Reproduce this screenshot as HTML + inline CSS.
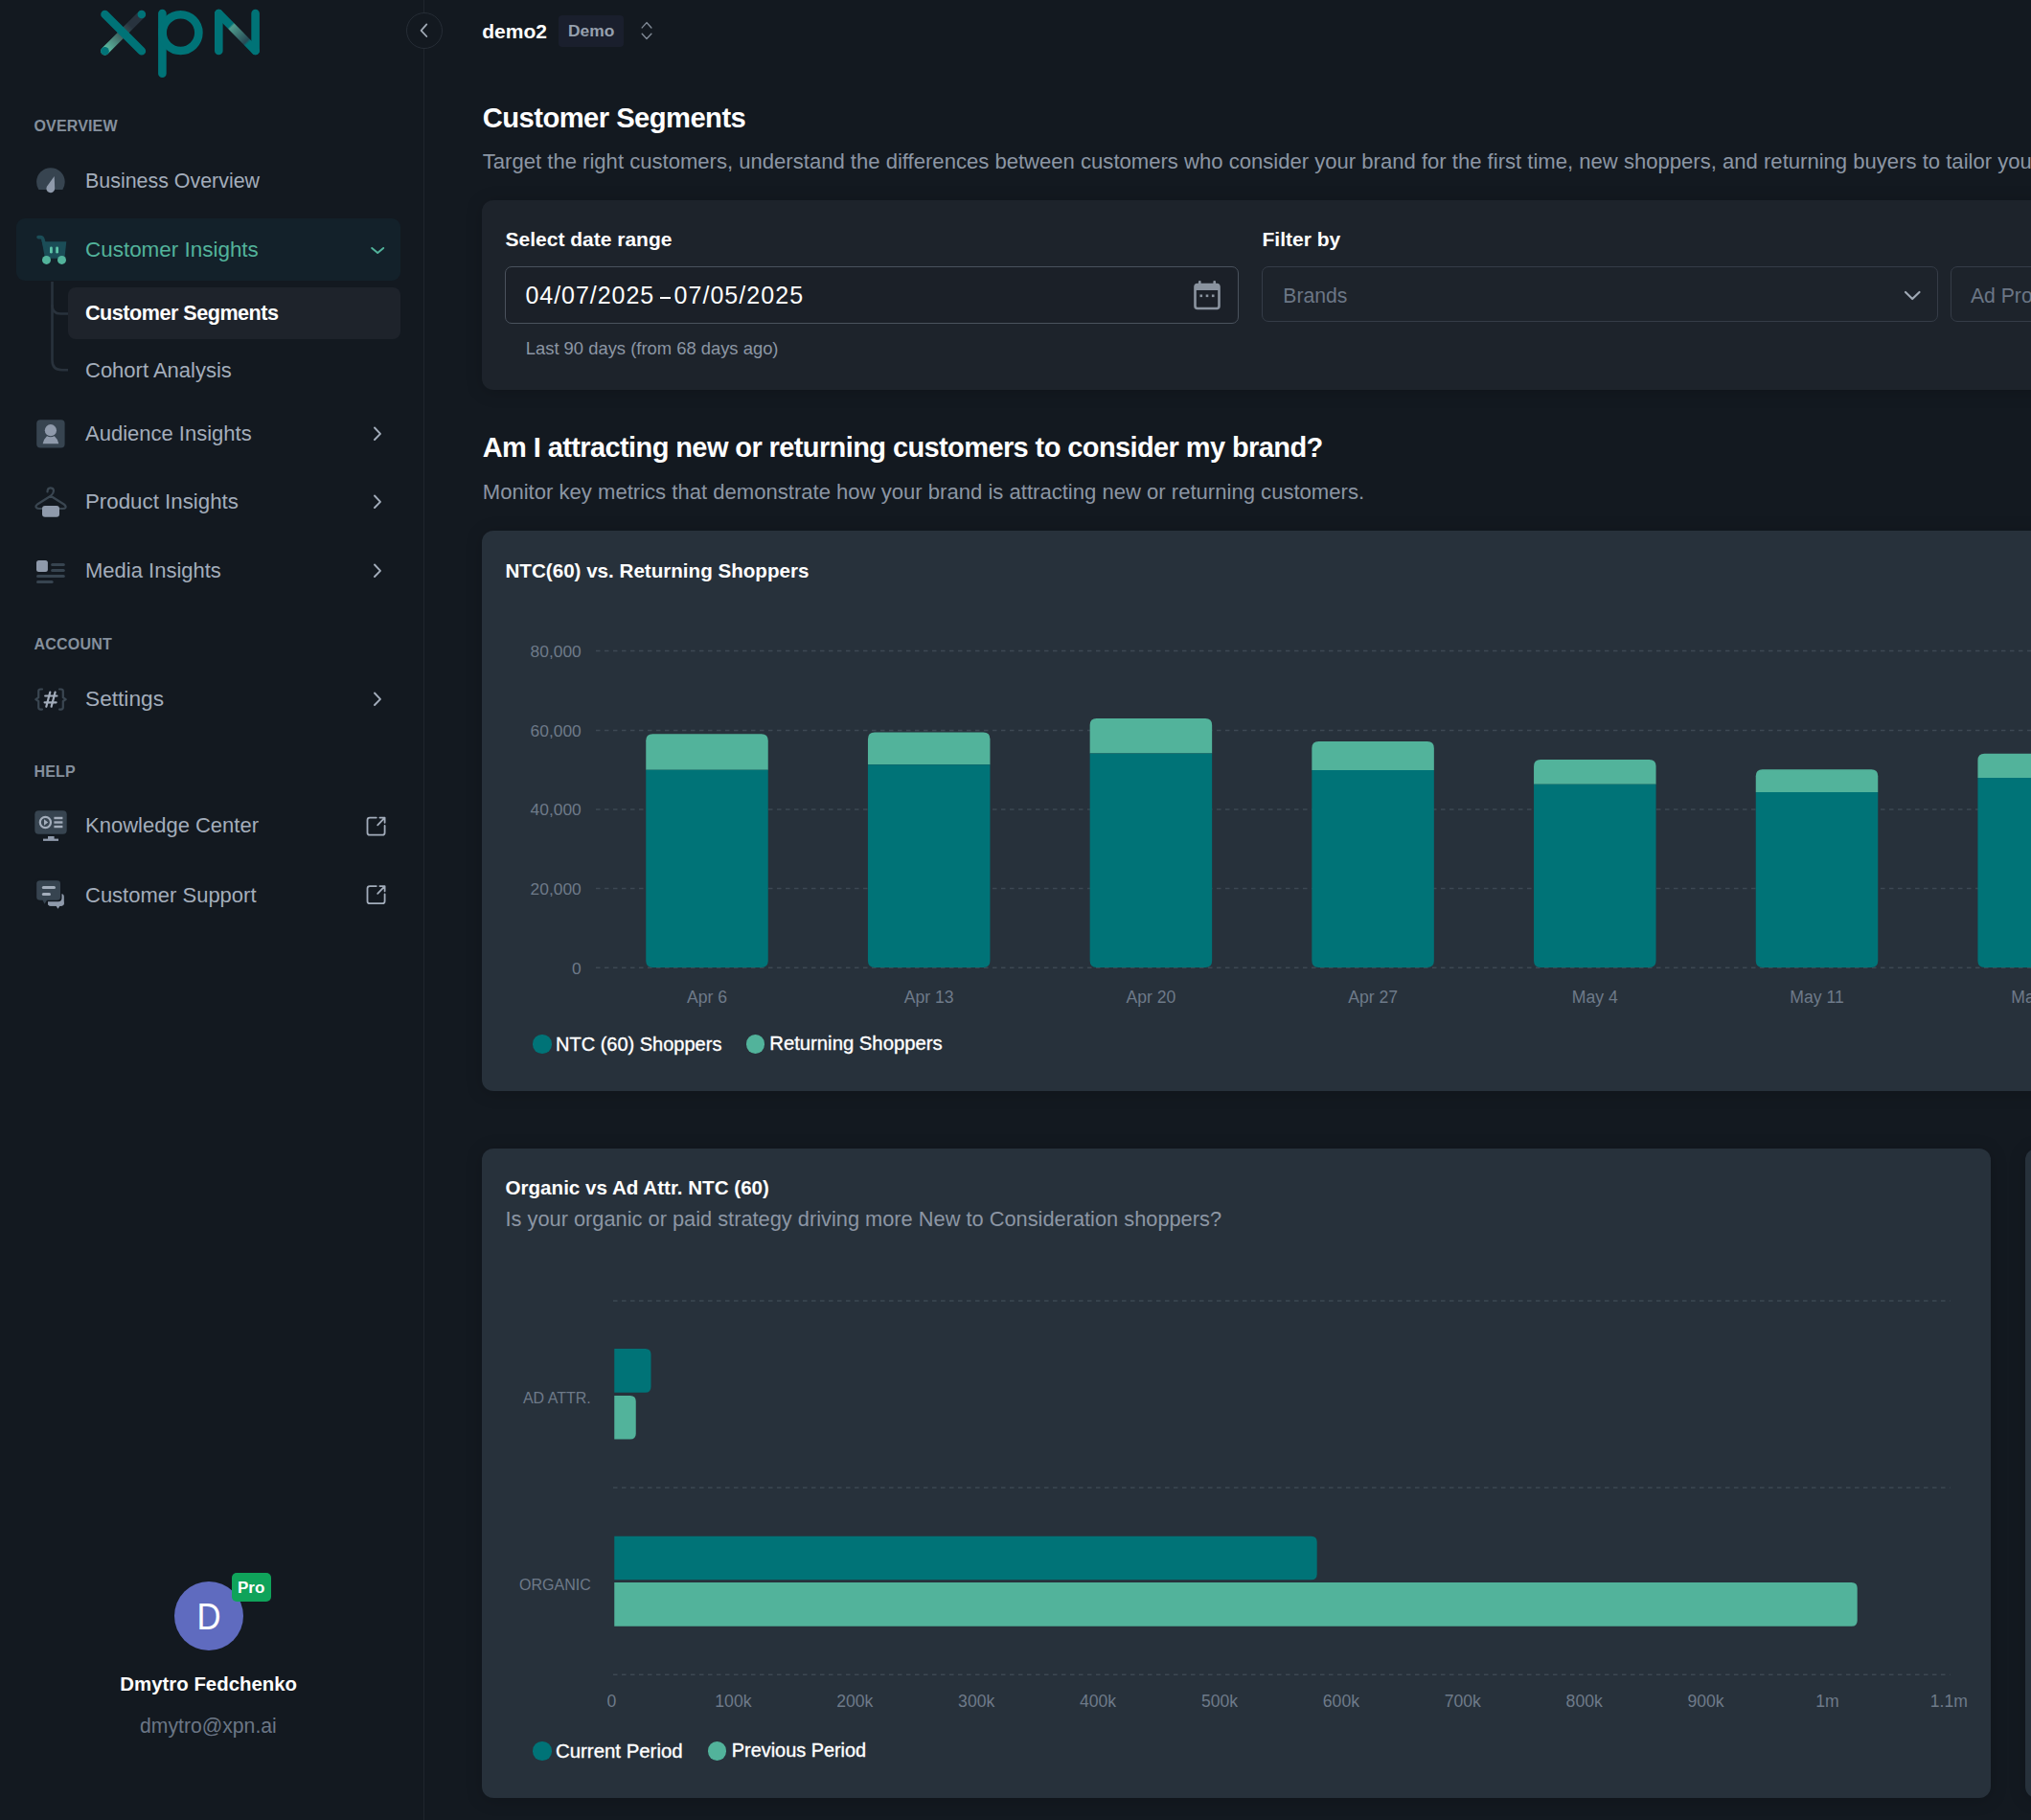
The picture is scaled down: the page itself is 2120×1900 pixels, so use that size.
<!DOCTYPE html>
<html><head><meta charset="utf-8"><title>Customer Segments</title>
<style>
html,body{margin:0;padding:0;}
body{width:2120px;height:1900px;overflow:hidden;position:relative;background:#131920;font-family:"Liberation Sans",sans-serif;}
.t{position:absolute;white-space:nowrap;}
.r{position:absolute;}
</style></head><body>
<div class="r" style="left:442px;top:0;width:1px;height:1900px;background:#1f252d"></div>
<svg class="r" style="left:0;top:0" width="300" height="90" viewBox="0 0 300 90">
<defs>
<linearGradient id="gx" x1="109.5" y1="53.3" x2="147.85" y2="15" gradientUnits="userSpaceOnUse">
<stop offset="0" stop-color="#5fc4a8"/><stop offset="0.45" stop-color="#3d5d5c"/><stop offset="0.7" stop-color="#28333e"/><stop offset="1" stop-color="#28333e"/></linearGradient>
<linearGradient id="gn" x1="228.3" y1="14" x2="266.6" y2="52.9" gradientUnits="userSpaceOnUse">
<stop offset="0" stop-color="#007377"/><stop offset="0.32" stop-color="#007377"/><stop offset="0.36" stop-color="#4f9c8c"/><stop offset="0.75" stop-color="#264a55"/><stop offset="0.8" stop-color="#007377"/><stop offset="1" stop-color="#007377"/></linearGradient>
</defs>
<g fill="none" stroke-linecap="round" stroke-width="8.6">
<line x1="109.5" y1="53.3" x2="147.85" y2="15" stroke="url(#gx)"/>
<line x1="109.5" y1="15" x2="147.85" y2="53.3" stroke="#007377"/>
<line x1="169.4" y1="14" x2="169.4" y2="76.7" stroke="#007377"/>
<circle cx="188.5" cy="34.1" r="18.9" stroke="#007377"/>
<line x1="228.3" y1="14" x2="228.3" y2="52.9" stroke="#007377"/>
<line x1="266.6" y1="14" x2="266.6" y2="52.9" stroke="#007377"/>
<line x1="228.3" y1="14" x2="266.6" y2="52.9" stroke="url(#gn)"/>
</g>
<circle cx="109.5" cy="53.3" r="4.3" fill="#007377"/>
<circle cx="147.85" cy="15" r="4.3" fill="#007377"/>
</svg>
<svg class="r" style="left:420px;top:9px" width="46" height="46" viewBox="420 9 46 46">
<circle cx="443" cy="32" r="18.5" fill="#131920" stroke="#262d36" stroke-width="1"/>
<polyline points="445.3,25.4 439.6,31.9 445.3,38" fill="none" stroke="#a0a9b5" stroke-width="1.8" stroke-linecap="round" stroke-linejoin="round"/>
</svg>
<div class="t" style="left:35.50px;top:124.46px;font-size:16px;line-height:16px;color:#85909d;font-weight:700;letter-spacing:0.15px;">OVERVIEW</div>
<div class="t" style="left:35.50px;top:665.46px;font-size:16px;line-height:16px;color:#85909d;font-weight:700;letter-spacing:0.2px;">ACCOUNT</div>
<div class="t" style="left:35.50px;top:798.46px;font-size:16px;line-height:16px;color:#85909d;font-weight:700;letter-spacing:0.15px;">HELP</div>
<div class="r" style="left:17.00px;top:228.00px;width:400.50px;height:65.00px;background:#13212a;border-radius:9px;"></div>
<div class="r" style="left:71.00px;top:300.20px;width:346.50px;height:53.70px;background:#1e232b;border-radius:8px;"></div>
<svg class="r" style="left:40px;top:290px" width="40" height="110" viewBox="40 290 40 110">
<path d="M54.5 294 V319 Q54.5 327.5 63 327.5 H71" fill="none" stroke="#29323c" stroke-width="2.6"/>
<path d="M54.5 318 V376 Q54.5 386.2 64.7 386.2 H71" fill="none" stroke="#29323c" stroke-width="2.6"/>
</svg>
<div class="t" style="left:89.00px;top:178.67px;font-size:21.42px;line-height:21.42px;color:#a3adbb;font-weight:400;">Business Overview</div>
<div class="t" style="left:89.00px;top:250.20px;font-size:22.44px;line-height:22.44px;color:#52b39b;font-weight:400;">Customer Insights</div>
<div class="t" style="left:89.00px;top:315.92px;font-size:21.6px;line-height:21.6px;color:#ffffff;font-weight:700;letter-spacing:-0.5px;">Customer Segments</div>
<div class="t" style="left:89.00px;top:375.88px;font-size:22px;line-height:22px;color:#a3adbb;font-weight:400;">Cohort Analysis</div>
<div class="t" style="left:89.00px;top:442.38px;font-size:22px;line-height:22px;color:#a3adbb;font-weight:400;">Audience Insights</div>
<div class="t" style="left:89.00px;top:513.12px;font-size:22.3px;line-height:22.3px;color:#a3adbb;font-weight:400;">Product Insights</div>
<div class="t" style="left:89.00px;top:585.38px;font-size:22px;line-height:22px;color:#a3adbb;font-weight:400;">Media Insights</div>
<div class="t" style="left:89.00px;top:717.78px;font-size:22.7px;line-height:22.7px;color:#a3adbb;font-weight:400;">Settings</div>
<div class="t" style="left:89.00px;top:851.38px;font-size:22px;line-height:22px;color:#a3adbb;font-weight:400;">Knowledge Center</div>
<div class="t" style="left:89.00px;top:923.88px;font-size:22px;line-height:22px;color:#a3adbb;font-weight:400;">Customer Support</div>
<svg class="r" style="left:0;top:0" width="440" height="960" viewBox="0 0 440 960">
<!-- gauge -->
<clipPath id="cg"><rect x="30" y="160" width="50" height="38"/></clipPath>
<circle cx="52.9" cy="190" r="14.8" fill="#374450" clip-path="url(#cg)"/>
<path d="M56.7 184 L57.2 196.8 A4.4 4.4 0 1 1 48.9 194.8 Z" fill="#8f9aab"/>
<!-- cart -->
<path d="M43.6 251.5 L45.4 252.2 H69.3 L67.4 269.8 H47 Z" fill="#1b4d57"/>
<path d="M40 247.6 H42.3 Q44.3 247.6 44.8 249.8 L47.2 258" fill="none" stroke="#1b4d57" stroke-width="3.6" stroke-linecap="round" stroke-linejoin="round"/>
<rect x="52" y="257.4" width="2.8" height="7.2" rx="1.4" fill="#5dc4a8"/>
<rect x="58.2" y="257.4" width="2.8" height="7.2" rx="1.4" fill="#5dc4a8"/>
<circle cx="48.5" cy="271.4" r="4.5" fill="#52b39b"/>
<circle cx="64.5" cy="271.4" r="4.5" fill="#52b39b"/>
<!-- audience -->
<rect x="38.2" y="438.2" width="29.4" height="29.4" rx="4" fill="#374450"/>
<circle cx="52.9" cy="449.2" r="6.1" fill="#8f9aab"/>
<path d="M49 455.2 Q52.9 457.5 56.8 455.2 Q60.5 458.5 61.3 463.2 H44.6 Q45.5 458.5 49 455.2 Z" fill="#8f9aab"/>
<!-- hanger -->
<path d="M49.5 513.5 Q49.5 509.3 52.7 509.3 Q56 509.3 56 512.6 Q56 515 52.9 517.8 L39 526.5 Q36.5 528.5 38 530 Q38.8 531 41 531 H65.5 Q67.8 531 68.4 530 Q69.2 528.3 66.8 526.5 L52.9 517.8" fill="none" stroke="#3a4651" stroke-width="2.2" stroke-linecap="round" stroke-linejoin="round"/>
<rect x="44" y="528" width="18" height="11.8" rx="3" fill="#8f9aab"/>
<!-- media -->
<rect x="38" y="584.9" width="11.9" height="12.1" rx="2.5" fill="#8f9aab"/>
<g stroke="#374450" stroke-width="3" stroke-linecap="round">
<line x1="54.6" y1="589.4" x2="66.3" y2="589.4"/><line x1="54.6" y1="595.5" x2="66.3" y2="595.5"/>
<line x1="39.5" y1="601.4" x2="66.3" y2="601.4"/><line x1="39.5" y1="607.4" x2="54.2" y2="607.4"/>
</g>
<!-- settings braces -->
<g fill="none" stroke="#3a4651" stroke-width="2.2" stroke-linecap="round" stroke-linejoin="round">
<path d="M44 719.5 H42.3 Q40.2 719.5 40.2 721.6 V728.2 L37.3 730.1 L40.2 732 V738.6 Q40.2 740.6 42.3 740.6 H44"/>
<path d="M62 719.5 H63.7 Q65.8 719.5 65.8 721.6 V728.2 L68.7 730.1 L65.8 732 V738.6 Q65.8 740.6 63.7 740.6 H62"/>
</g>
<g stroke="#a3adbb" stroke-width="2.2" stroke-linecap="round">
<line x1="52.3" y1="722.5" x2="48.3" y2="737.7"/><line x1="57.6" y1="722.5" x2="53.6" y2="737.7"/>
<line x1="47.2" y1="726.5" x2="59.4" y2="726.5"/><line x1="46.6" y1="733.3" x2="58.6" y2="733.3"/>
</g>
<!-- knowledge -->
<rect x="36.3" y="846.2" width="33.4" height="24.6" rx="4" fill="#374450"/>
<circle cx="47.4" cy="858.5" r="5.6" fill="none" stroke="#a3adbb" stroke-width="2.2"/>
<path d="M46 855.3 L50.2 858.5 L46 861.7 Z" fill="#a3adbb"/>
<g stroke="#a3adbb" stroke-width="2.4"><line x1="56.4" y1="854" x2="65.4" y2="854"/><line x1="56.4" y1="858.5" x2="65.4" y2="858.5"/><line x1="56.4" y1="863" x2="65.4" y2="863"/></g>
<rect x="50" y="873" width="6.6" height="3" fill="#8f9aab"/>
<rect x="45" y="875.6" width="16" height="2.3" fill="#8f9aab"/>
<!-- support -->
<path d="M52 940 H63 Q66.8 940 66.8 943.2 V942.5 Q66.8 945.7 63.5 945.7 H62.5 L60.5 948.7 L58.5 945.7 H53 Q50 945.7 50 942.5 Z" fill="#8f9aab"/>
<path d="M63.5 933 Q66.8 933 66.8 936 V943 Q66.8 945.7 63.5 945.7 H53 Q50 945.7 50 943 V941 H63.5 Z" fill="#8f9aab"/>
<path d="M41.7 917.8 H60.2 Q64.5 917.8 64.5 921.8 V937.5 Q64.5 941.2 60.8 941.2 H49.5 L46.5 945.3 L44.5 941.2 H41.7 Q36.8 941.2 36.8 937.5 V921.8 Q36.8 917.8 41.7 917.8 Z" fill="#131920"/>
<path d="M42 919.3 H59.5 Q63 919.3 63 922.5 V936.5 Q63 939.7 59.5 939.7 H49 L46.5 943.8 L44.5 939.7 H42 Q38.2 939.7 38.2 936.5 V922.5 Q38.2 919.3 42 919.3 Z" fill="#374450"/>
<g stroke="#a3adbb" stroke-width="3" stroke-linecap="round"><line x1="45.3" y1="926.5" x2="56.5" y2="926.5"/><line x1="45.3" y1="933.4" x2="51.5" y2="933.4"/></g>
<!-- chevrons -->
<polyline points="388.2,259 394.2,264 400.2,259" fill="none" stroke="#52b39b" stroke-width="2" stroke-linecap="round" stroke-linejoin="round"/>
<g fill="none" stroke="#a3adbb" stroke-width="1.9" stroke-linecap="round" stroke-linejoin="round">
<polyline points="391,446.5 397,452.8 391,459"/>
<polyline points="391,517.5 397,523.8 391,530"/>
<polyline points="391,589.5 397,595.8 391,602"/>
<polyline points="391,723.5 397,729.8 391,736"/>
</g>
<!-- external links -->
<g fill="none" stroke="#a3adbb" stroke-width="1.8" stroke-linecap="round" stroke-linejoin="round">
<path d="M392.8 853.6 H386 Q383.5 853.6 383.5 856.1 V869.2 Q383.5 871.7 386 871.7 H399.1 Q401.6 871.7 401.6 869.2 V862"/>
<path d="M394.2 861.3 L401.4 853.8 M396.4 853.6 H401.6 V858.8"/>
<path d="M392.8 925.1 H386 Q383.5 925.1 383.5 927.6 V940.7 Q383.5 943.2 386 943.2 H399.1 Q401.6 943.2 401.6 940.7 V933.5"/>
<path d="M394.2 932.8 L401.4 925.3 M396.4 925.1 H401.6 V930.3"/>
</g>
</svg>
<div class="r" style="left:181.8px;top:1650.6px;width:72px;height:72px;border-radius:50%;background:#5f6bbf"></div>
<div class="t" style="left:18.20px;width:400px;text-align:center;top:1668.61px;font-size:38.5px;line-height:38.5px;color:#ffffff;font-weight:400;transform:scaleX(0.9);">D</div>
<div class="r" style="left:241.60px;top:1641.90px;width:41.20px;height:30.00px;background:#0fa35a;border-radius:5px;"></div>
<div class="t" style="left:62.20px;width:400px;text-align:center;top:1648.51px;font-size:17px;line-height:17px;color:#ffffff;font-weight:700;">Pro</div>
<div class="t" style="left:17.70px;width:400px;text-align:center;top:1748.23px;font-size:20.4px;line-height:20.4px;color:#ffffff;font-weight:700;">Dmytro Fedchenko</div>
<div class="t" style="left:17.40px;width:400px;text-align:center;top:1791.45px;font-size:21.2px;line-height:21.2px;color:#6b7685;font-weight:400;">dmytro@xpn.ai</div>
<div class="t" style="left:503.25px;top:22.22px;font-size:21px;line-height:21px;color:#ffffff;font-weight:700;">demo2</div>
<div class="r" style="left:583.00px;top:16.25px;width:67.75px;height:32.50px;background:#1a1f2d;border-radius:4px;"></div>
<div class="t" style="left:593.00px;top:23.67px;font-size:17.4px;line-height:17.4px;color:#96a0ae;font-weight:700;">Demo</div>
<svg class="r" style="left:660px;top:18px" width="30" height="30" viewBox="660 18 30 30">
<g fill="none" stroke="#808a96" stroke-width="1.4" stroke-linecap="round" stroke-linejoin="round">
<polyline points="670.2,28.9 675,23.6 679.9,28.9"/><polyline points="670.2,35.3 675,40.4 679.9,35.3"/></g></svg>
<div class="t" style="left:503.75px;top:108.53px;font-size:29.2px;line-height:29.2px;color:#ffffff;font-weight:700;letter-spacing:-0.55px;">Customer Segments</div>
<div class="t" style="left:503.75px;top:157.55px;font-size:22.09px;line-height:22.09px;color:#8c96a4;font-weight:400;">Target the right customers, understand the differences between customers who consider your brand for the first time, new shoppers, and returning buyers to tailor your marketing strategies.</div>
<div class="r" style="left:503.00px;top:209.00px;width:1697.00px;height:198.00px;background:#1d232b;border-radius:12px;box-shadow:0 2px 18px rgba(0,0,0,0.18);"></div>
<div class="t" style="left:527.50px;top:239.22px;font-size:21px;line-height:21px;color:#ffffff;font-weight:700;">Select date range</div>
<div class="r" style="left:527px;top:278.25px;width:765.5px;height:59.25px;box-sizing:border-box;border:1.5px solid #4a525d;border-radius:7px;background:#1b2028"></div>
<div class="t" style="left:548.50px;top:295.94px;font-size:25px;line-height:25px;color:#ffffff;font-weight:400;letter-spacing:0.95px;">04/07/2025</div>
<div class="r" style="left:688.50px;top:310.00px;width:11.30px;height:2.00px;background:#ffffff;border-radius:0;"></div>
<div class="t" style="left:703.50px;top:295.94px;font-size:25px;line-height:25px;color:#ffffff;font-weight:400;letter-spacing:1.05px;">07/05/2025</div>
<svg class="r" style="left:1240px;top:288px" width="40" height="40" viewBox="1240 288 40 40">
<rect x="1247.5" y="297" width="25" height="25" rx="2.5" fill="none" stroke="#8a939f" stroke-width="2.6"/>
<rect x="1247.5" y="297" width="25" height="6" fill="#8a939f"/>
<rect x="1251" y="293" width="2.6" height="6" rx="1" fill="#8a939f"/>
<rect x="1266.4" y="293" width="2.6" height="6" rx="1" fill="#8a939f"/>
<rect x="1252.5" y="307.5" width="2.6" height="2.6" fill="#8a939f"/><rect x="1258.7" y="307.5" width="2.6" height="2.6" fill="#8a939f"/><rect x="1264.9" y="307.5" width="2.6" height="2.6" fill="#8a939f"/>
</svg>
<div class="t" style="left:548.75px;top:355.42px;font-size:18.4px;line-height:18.4px;color:#8c96a4;font-weight:400;">Last 90 days (from 68 days ago)</div>
<div class="t" style="left:1317.50px;top:239.22px;font-size:21px;line-height:21px;color:#ffffff;font-weight:700;">Filter by</div>
<div class="r" style="left:1317px;top:278.25px;width:706.25px;height:57.5px;box-sizing:border-box;border:1.5px solid #353c47;border-radius:7px"></div>
<div class="t" style="left:1339.25px;top:298.30px;font-size:21.2px;line-height:21.2px;color:#6b7685;font-weight:400;">Brands</div>
<svg class="r" style="left:1980px;top:296px" width="30" height="24" viewBox="1980 296 30 24">
<polyline points="1989,305 1996.2,312 2003.5,305" fill="none" stroke="#a0a9b5" stroke-width="2.2" stroke-linecap="round" stroke-linejoin="round"/></svg>
<div class="r" style="left:2035.75px;top:278.25px;width:400px;height:57.5px;box-sizing:border-box;border:1.5px solid #353c47;border-radius:7px"></div>
<div class="t" style="left:2056.90px;top:298.05px;font-size:21.2px;line-height:21.2px;color:#6b7685;font-weight:400;">Ad Product</div>
<div class="t" style="left:503.75px;top:453.45px;font-size:29px;line-height:29px;color:#ffffff;font-weight:700;letter-spacing:-0.6px;">Am I attracting new or returning customers to consider my brand?</div>
<div class="t" style="left:503.75px;top:502.56px;font-size:22.08px;line-height:22.08px;color:#8c96a4;font-weight:400;">Monitor key metrics that demonstrate how your brand is attracting new or returning customers.</div>
<div class="r" style="left:503.00px;top:553.75px;width:1797.00px;height:585.00px;background:#27313b;border-radius:12px;box-shadow:0 2px 18px rgba(0,0,0,0.18);"></div>
<div class="t" style="left:527.50px;top:585.56px;font-size:20.6px;line-height:20.6px;color:#ffffff;font-weight:700;">NTC(60) vs. Returning Shoppers</div>
<div class="t" style="left:538.00px;width:400px;text-align:center;top:1032.60px;font-size:17.6px;line-height:17.6px;color:#6e7a89;font-weight:400;">Apr 6</div>
<div class="t" style="left:769.70px;width:400px;text-align:center;top:1032.60px;font-size:17.6px;line-height:17.6px;color:#6e7a89;font-weight:400;">Apr 13</div>
<div class="t" style="left:1001.40px;width:400px;text-align:center;top:1032.60px;font-size:17.6px;line-height:17.6px;color:#6e7a89;font-weight:400;">Apr 20</div>
<div class="t" style="left:1233.10px;width:400px;text-align:center;top:1032.60px;font-size:17.6px;line-height:17.6px;color:#6e7a89;font-weight:400;">Apr 27</div>
<div class="t" style="left:1464.80px;width:400px;text-align:center;top:1032.60px;font-size:17.6px;line-height:17.6px;color:#6e7a89;font-weight:400;">May 4</div>
<div class="t" style="left:1696.50px;width:400px;text-align:center;top:1032.60px;font-size:17.6px;line-height:17.6px;color:#6e7a89;font-weight:400;">May 11</div>
<div class="t" style="left:1928.20px;width:400px;text-align:center;top:1032.60px;font-size:17.6px;line-height:17.6px;color:#6e7a89;font-weight:400;">May 18</div>
<svg class="r" style="left:0;top:0" width="2120" height="1900" viewBox="0 0 2120 1900">
<line x1="622" y1="679.5" x2="2200" y2="679.5" stroke="#3d4853" stroke-width="1.6" stroke-dasharray="4.5 4.5"/>
<line x1="622" y1="762.5" x2="2200" y2="762.5" stroke="#3d4853" stroke-width="1.6" stroke-dasharray="4.5 4.5"/>
<line x1="622" y1="845" x2="2200" y2="845" stroke="#3d4853" stroke-width="1.6" stroke-dasharray="4.5 4.5"/>
<line x1="622" y1="927.5" x2="2200" y2="927.5" stroke="#3d4853" stroke-width="1.6" stroke-dasharray="4.5 4.5"/>
<line x1="622" y1="1010.25" x2="2200" y2="1010.25" stroke="#3d4853" stroke-width="1.6" stroke-dasharray="4.5 4.5"/>
<path d="M674.25 803.75 V773.25 Q674.25 766.25 681.25 766.25 H794.75 Q801.75 766.25 801.75 773.25 V803.75 Z" fill="#52b39b"/>
<path d="M674.25 803.75 V1003.0 Q674.25 1010.0 681.25 1010.0 H794.75 Q801.75 1010.0 801.75 1003.0 V803.75 Z" fill="#007377"/>
<path d="M905.95 798.25 V771.5 Q905.95 764.5 912.95 764.5 H1026.45 Q1033.45 764.5 1033.45 771.5 V798.25 Z" fill="#52b39b"/>
<path d="M905.95 798.25 V1003.0 Q905.95 1010.0 912.95 1010.0 H1026.45 Q1033.45 1010.0 1033.45 1003.0 V798.25 Z" fill="#007377"/>
<path d="M1137.65 786.5 V757 Q1137.65 750 1144.65 750 H1258.15 Q1265.15 750 1265.15 757 V786.5 Z" fill="#52b39b"/>
<path d="M1137.65 786.5 V1003.0 Q1137.65 1010.0 1144.65 1010.0 H1258.15 Q1265.15 1010.0 1265.15 1003.0 V786.5 Z" fill="#007377"/>
<path d="M1369.35 804 V781 Q1369.35 774 1376.35 774 H1489.85 Q1496.85 774 1496.85 781 V804 Z" fill="#52b39b"/>
<path d="M1369.35 804 V1003 Q1369.35 1010 1376.35 1010 H1489.85 Q1496.85 1010 1496.85 1003 V804 Z" fill="#007377"/>
<path d="M1601.05 818.75 V800 Q1601.05 793 1608.05 793 H1721.55 Q1728.55 793 1728.55 800 V818.75 Z" fill="#52b39b"/>
<path d="M1601.05 818.75 V1003.0 Q1601.05 1010.0 1608.05 1010.0 H1721.55 Q1728.55 1010.0 1728.55 1003.0 V818.75 Z" fill="#007377"/>
<path d="M1832.75 827.0 V810.2 Q1832.75 803.2 1839.75 803.2 H1953.25 Q1960.25 803.2 1960.25 810.2 V827.0 Z" fill="#52b39b"/>
<path d="M1832.75 827 V1003 Q1832.75 1010 1839.75 1010 H1953.25 Q1960.25 1010 1960.25 1003 V827 Z" fill="#007377"/>
<path d="M2064.45 812.1 V793.7 Q2064.45 786.7 2071.45 786.7 H2184.95 Q2191.95 786.7 2191.95 793.7 V812.1 Z" fill="#52b39b"/>
<path d="M2064.45 812.1 V1003.0 Q2064.45 1010.0 2071.45 1010.0 H2184.95 Q2191.95 1010.0 2191.95 1003.0 V812.1 Z" fill="#007377"/>
</svg>
<div class="t" style="right:1513.25px;top:671.77px;font-size:17.4px;line-height:17.4px;color:#6e7a89;font-weight:400;">80,000</div>
<div class="t" style="right:1513.25px;top:754.77px;font-size:17.4px;line-height:17.4px;color:#6e7a89;font-weight:400;">60,000</div>
<div class="t" style="right:1513.25px;top:837.27px;font-size:17.4px;line-height:17.4px;color:#6e7a89;font-weight:400;">40,000</div>
<div class="t" style="right:1513.25px;top:919.77px;font-size:17.4px;line-height:17.4px;color:#6e7a89;font-weight:400;">20,000</div>
<div class="t" style="right:1513.25px;top:1002.52px;font-size:17.4px;line-height:17.4px;color:#6e7a89;font-weight:400;">0</div>
<div class="r" style="left:556.3px;top:1080.3px;width:19.4px;height:19.4px;border-radius:50%;background:#007377"></div>
<div class="t" style="left:580.00px;top:1079.57px;font-size:20px;line-height:20px;color:#ffffff;font-weight:400;-webkit-text-stroke:0.35px #fff;">NTC (60) Shoppers</div>
<div class="r" style="left:779.1px;top:1080.3px;width:19.4px;height:19.4px;border-radius:50%;background:#52b39b"></div>
<div class="t" style="left:803.25px;top:1079.32px;font-size:20.3px;line-height:20.3px;color:#ffffff;font-weight:400;-webkit-text-stroke:0.35px #fff;">Returning Shoppers</div>
<div class="r" style="left:503.00px;top:1199.00px;width:1574.50px;height:677.50px;background:#27313b;border-radius:12px;box-shadow:0 2px 18px rgba(0,0,0,0.18);"></div>
<div class="r" style="left:2113.50px;top:1199.00px;width:186.50px;height:677.50px;background:#27313b;border-radius:12px;box-shadow:0 2px 18px rgba(0,0,0,0.18);"></div>
<div class="t" style="left:527.50px;top:1230.06px;font-size:20.6px;line-height:20.6px;color:#ffffff;font-weight:700;">Organic vs Ad Attr. NTC (60)</div>
<div class="t" style="left:527.50px;top:1261.55px;font-size:21.8px;line-height:21.8px;color:#8c96a4;font-weight:400;">Is your organic or paid strategy driving more New to Consideration shoppers?</div>
<svg class="r" style="left:0;top:0" width="2120" height="1900" viewBox="0 0 2120 1900">
<line x1="640" y1="1358" x2="2035.6" y2="1358" stroke="#3d4853" stroke-width="1.6" stroke-dasharray="4.5 4.5"/>
<line x1="640" y1="1553" x2="2035.6" y2="1553" stroke="#3d4853" stroke-width="1.6" stroke-dasharray="4.5 4.5"/>
<line x1="640" y1="1748.25" x2="2035.6" y2="1748.25" stroke="#3d4853" stroke-width="1.6" stroke-dasharray="4.5 4.5"/>
<path d="M641.25 1408 H673.5 Q679.5 1408 679.5 1414 V1447.75 Q679.5 1453.75 673.5 1453.75 H641.25 Z" fill="#007377"/>
<path d="M641.25 1457 H657.75 Q663.75 1457 663.75 1463 V1496.5 Q663.75 1502.5 657.75 1502.5 H641.25 Z" fill="#52b39b"/>
<path d="M641.25 1603.75 H1368.7 Q1374.7 1603.75 1374.7 1609.75 V1643.25 Q1374.7 1649.25 1368.7 1649.25 H641.25 Z" fill="#007377"/>
<path d="M641.25 1652 H1932.7 Q1938.7 1652 1938.7 1658 V1691.75 Q1938.7 1697.75 1932.7 1697.75 H641.25 Z" fill="#52b39b"/>
</svg>
<div class="t" style="right:1503.25px;top:1452.46px;font-size:16px;line-height:16px;color:#6e7a89;font-weight:400;">AD ATTR.</div>
<div class="t" style="right:1503.25px;top:1647.46px;font-size:16px;line-height:16px;color:#6e7a89;font-weight:400;">ORGANIC</div>
<div class="t" style="left:438.50px;width:400px;text-align:center;top:1767.60px;font-size:17.6px;line-height:17.6px;color:#6e7a89;font-weight:400;">0</div>
<div class="t" style="left:565.40px;width:400px;text-align:center;top:1767.60px;font-size:17.6px;line-height:17.6px;color:#6e7a89;font-weight:400;">100k</div>
<div class="t" style="left:692.30px;width:400px;text-align:center;top:1767.60px;font-size:17.6px;line-height:17.6px;color:#6e7a89;font-weight:400;">200k</div>
<div class="t" style="left:819.20px;width:400px;text-align:center;top:1767.60px;font-size:17.6px;line-height:17.6px;color:#6e7a89;font-weight:400;">300k</div>
<div class="t" style="left:946.10px;width:400px;text-align:center;top:1767.60px;font-size:17.6px;line-height:17.6px;color:#6e7a89;font-weight:400;">400k</div>
<div class="t" style="left:1073.00px;width:400px;text-align:center;top:1767.60px;font-size:17.6px;line-height:17.6px;color:#6e7a89;font-weight:400;">500k</div>
<div class="t" style="left:1199.90px;width:400px;text-align:center;top:1767.60px;font-size:17.6px;line-height:17.6px;color:#6e7a89;font-weight:400;">600k</div>
<div class="t" style="left:1326.80px;width:400px;text-align:center;top:1767.60px;font-size:17.6px;line-height:17.6px;color:#6e7a89;font-weight:400;">700k</div>
<div class="t" style="left:1453.70px;width:400px;text-align:center;top:1767.60px;font-size:17.6px;line-height:17.6px;color:#6e7a89;font-weight:400;">800k</div>
<div class="t" style="left:1580.60px;width:400px;text-align:center;top:1767.60px;font-size:17.6px;line-height:17.6px;color:#6e7a89;font-weight:400;">900k</div>
<div class="t" style="left:1707.50px;width:400px;text-align:center;top:1767.60px;font-size:17.6px;line-height:17.6px;color:#6e7a89;font-weight:400;">1m</div>
<div class="t" style="left:1834.40px;width:400px;text-align:center;top:1767.60px;font-size:17.6px;line-height:17.6px;color:#6e7a89;font-weight:400;">1.1m</div>
<div class="r" style="left:556.3px;top:1818.3px;width:19.4px;height:19.4px;border-radius:50%;background:#007377"></div>
<div class="t" style="left:580.00px;top:1817.73px;font-size:20.4px;line-height:20.4px;color:#ffffff;font-weight:400;-webkit-text-stroke:0.35px #fff;">Current Period</div>
<div class="r" style="left:739.1px;top:1818.3px;width:19.4px;height:19.4px;border-radius:50%;background:#52b39b"></div>
<div class="t" style="left:763.75px;top:1818.15px;font-size:19.9px;line-height:19.9px;color:#ffffff;font-weight:400;-webkit-text-stroke:0.35px #fff;">Previous Period</div>
</body></html>
